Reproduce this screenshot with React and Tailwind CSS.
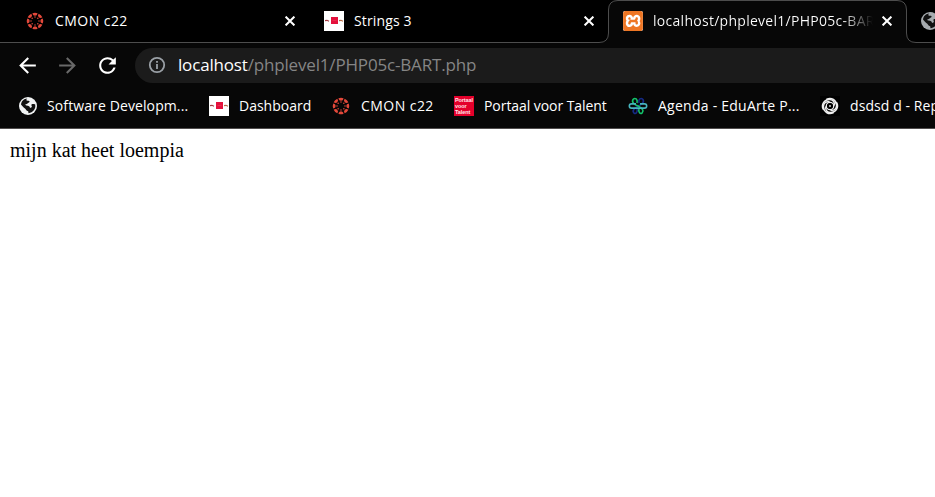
import { SiXampp } from "react-icons/si";
import { MdArrowBack, MdArrowForward, MdRefresh } from "react-icons/md";

const ANGLES = [0, 45, 90, 135, 180, 225, 270, 315];

function CanvasIcon() {
  return (
    <svg viewBox="0 0 20 20" className="size-5 shrink-0" fill="#e2483a">
      {ANGLES.map((a) => (
        <g key={a} transform={`rotate(${a} 10 10)`}>
          <path d="M7.4 2.2Q10 1.2 12.6 2.2Q12.2 4.7 10 4.7Q7.8 4.7 7.4 2.2Z" />
          <circle cx="10" cy="6" r=".75" />
        </g>
      ))}
    </svg>
  );
}

function ItsIcon() {
  return (
    <svg viewBox="0 0 20 20" className="size-5 shrink-0">
      <path fill="#fff" d="M0 0h20v20H0z" />
      <path fill="#e4103c" d="M7 6h7v7H7z" />
      <path stroke="#ea2c50" d="M8.5 9.5h4" />
      <path stroke="#a83a42" strokeWidth="1.2" d="M1 9.6l2-.3 2 .9" fill="none" />
      <path stroke="#b86a45" strokeWidth="1.2" d="M15 9.6l2-.3 2 .9" fill="none" />
    </svg>
  );
}

function GlobeIcon({ color = "#f1f3f4", land = "#111" }) {
  return (
    <svg viewBox="0 0 20 20" className="size-5 shrink-0">
      <circle cx="10" cy="10" r="9" fill={color} />
      <path fill={land} d="M3 8.5C3.5 5 6 2.8 9.3 2.6C7.5 4 8.3 5 10.2 4.8C12 4.6 12 6.3 10.5 6.8C9.2 7.3 9.3 8.2 8 8.3C6.8 8.4 7 9.2 8.4 9.4C10.8 9.5 12 10.4 12 12C14 11.8 14.3 10.3 13.3 9.3C13.2 8 15.3 7.8 17.2 8.5C18 13 15 16.5 10.5 17.3L10.2 15.2C8 14.8 8.2 13 7 12.4C5.5 11.8 4.5 10 3 8.5Z" />
    </svg>
  );
}

function SwirlIcon() {
  return (
    <svg viewBox="0 0 20 20" className="size-5 shrink-0 bg-black" fill="none" stroke="#eee" strokeLinecap="round">
      {[0, 90, 180, 270].map((a) => (
        <path
          key={a}
          transform={`rotate(${a} 10 10)`}
          strokeWidth="1.5"
          d="M3.2 13.2C1 8.5 4.2 3.6 9.2 3.4C12.8 3.3 14.8 6 14.2 9"
        />
      ))}
      <circle cx="10" cy="10" r="3.7" strokeWidth="1.3" />
      <circle cx="10" cy="10" r="2.8" fill="#000" stroke="none" />
      <circle cx="10" cy="10" r="1" fill="#ccc" stroke="none" />
    </svg>
  );
}

function AgendaIcon() {
  return (
    <svg viewBox="0 0 20 20" className="size-5 shrink-0" fill="none" strokeWidth="1.6">
      <path stroke="#152a86" d="M10 10C7 12 3.7 14.5 5.8 16.8C7.7 18.4 10 16.5 9 13M11 7C10 3 13 1.5 14.8 3.3C17 6 13.3 9 10 10" />
      <path stroke="#13c46b" d="M9 7C10 3 7 1.5 5.2 3.3C3 6 6.7 9 10 10C14 12 16.3 14.5 14.2 16.8C12.3 18.4 10 16.5 11 13" />
      <path stroke="#46b4bd" d="M8 7.9H3.5C.6 7.9.6 12.1 3.5 12.1H16.5C19.4 12.1 19.4 7.9 16.5 7.9H12" />
    </svg>
  );
}

function PortaalIcon() {
  return (
    <div className="flex size-5 shrink-0 flex-col justify-center bg-[#e4002b] pl-px font-['Liberation_Sans_Narrow','Liberation_Sans',sans-serif] text-[5.5px] font-bold leading-[6px] tracking-[-0.1px] text-[#ffe3e8]">
      <div>Portaal</div>
      <div>voor</div>
      <div>Talent</div>
    </div>
  );
}

function Close() {
  return (
    <svg viewBox="0 0 10 10" className="size-[10px] shrink-0" stroke="#fff" strokeWidth="2">
      <path d="M.6.6l8.8 8.8M9.4.6L.6 9.4" />
    </svg>
  );
}

export default function App() {
  return (
    <div className="flex h-[497px] w-[935px] flex-col overflow-hidden bg-white font-['Open_Sans',sans-serif] text-sm text-white">
      <header className="relative flex h-[43px] shrink-0 bg-black">
        <svg viewBox="0 0 935 43" className="absolute inset-0 h-[43px] w-[935px]" fill="#070707" stroke="#4d4d4d">
          <path d="M-1 44V42.5H599Q608.5 42.5 608.5 33V10Q608.5.5 618 .5H897Q906.5.5 906.5 10V33Q906.5 42.5 916 42.5H936V44Z" />
        </svg>
        <div className="relative flex h-[42px] w-[309px] shrink-0 items-center pl-[25px] pr-[14px]">
          <CanvasIcon />
          <span className="ml-[10px] flex-1 whitespace-nowrap tracking-[0.45px]">CMON c22</span>
          <Close />
        </div>
        <div className="relative mt-[9px] h-[25px] w-px bg-[#505050]" />
        <div className="relative flex h-[42px] w-[299px] shrink-0 items-center pl-[14px] pr-[15px]">
          <span className="ml-px"><ItsIcon /></span>
          <span className="ml-[10px] flex-1 whitespace-nowrap tracking-[0.15px]">Strings 3</span>
          <span className="-mr-px"><Close /></span>
        </div>
        <div className="relative flex h-[42px] w-[298px] shrink-0 items-center pl-[14px] pr-[15px]">
          <span className="relative ml-px size-5 shrink-0 overflow-hidden rounded-[2px] bg-white text-[#ee7624]">
            <SiXampp className="size-5" />
          </span>
          <span className="ml-[10px] w-[220px] overflow-hidden whitespace-nowrap bg-[linear-gradient(90deg,#fff_86%,transparent)] bg-clip-text tracking-[0.28px] text-transparent">
            localhost/phplevel1/PHP05c-BART.php
          </span>
          <span className="-mr-px ml-auto"><Close /></span>
        </div>
        <div className="relative flex h-[42px] items-center pl-[14px]">
          <GlobeIcon color="#a6abaf" />
        </div>
      </header>

      <nav className="flex h-[44px] shrink-0 items-center bg-[#070707] pl-[15px]">
        <MdArrowBack className="size-[25px] shrink-0" />
        <MdArrowForward className="ml-[15px] size-[25px] shrink-0 text-[#696969]" />
        <MdRefresh className="ml-[15px] size-[25px] shrink-0" />
        <div className="ml-[15px] flex h-[35px] flex-1 items-center rounded-l-full bg-[#1b1b1b] pl-[13px]">
          <svg viewBox="0 0 18 18" className="size-[18px]" fill="none" stroke="#9aa0a6" strokeWidth="1.8">
            <circle cx="9" cy="9" r="7.2" />
            <path d="M9 8v5M9 5v1.8" />
          </svg>
          <span className="ml-3 whitespace-nowrap text-[17px] tracking-[-0.17px]">
            localhost<span className="text-[#858585]">/phplevel1/PHP05c-BART.php</span>
          </span>
        </div>
      </nav>

      <div className="flex h-[42px] shrink-0 items-center overflow-hidden whitespace-nowrap border-b border-[#504d4d] bg-[#070707] pb-[3px] pl-[18px]">
        <div className="flex w-[191px] shrink-0 items-center gap-[9px]">
          <GlobeIcon />
          <span className="tracking-[0.11px]">Software Developm...</span>
        </div>
        <div className="flex w-[122px] shrink-0 items-center gap-[10px]">
          <ItsIcon />
          <span>Dashboard</span>
        </div>
        <div className="flex w-[123px] shrink-0 items-center gap-[10px]">
          <CanvasIcon />
          <span className="tracking-[0.45px]">CMON c22</span>
        </div>
        <div className="flex w-[174px] shrink-0 items-center gap-[10px]">
          <PortaalIcon />
          <span className="tracking-[-0.06px]">Portaal voor Talent</span>
        </div>
        <div className="flex w-[192px] shrink-0 items-center gap-[10px]">
          <AgendaIcon />
          <span className="tracking-[0.25px]">Agenda - EduArte P...</span>
        </div>
        <div className="flex shrink-0 items-center gap-[10px]">
          <SwirlIcon />
          <span className="tracking-[0.08px]">dsdsd d - Replit</span>
        </div>
      </div>

      <main className="flex-1 bg-white px-[10px] pt-[9px] font-['Liberation_Serif',serif] text-[20px] leading-6 text-black">
        mijn kat heet loempia
      </main>
    </div>
  );
}
